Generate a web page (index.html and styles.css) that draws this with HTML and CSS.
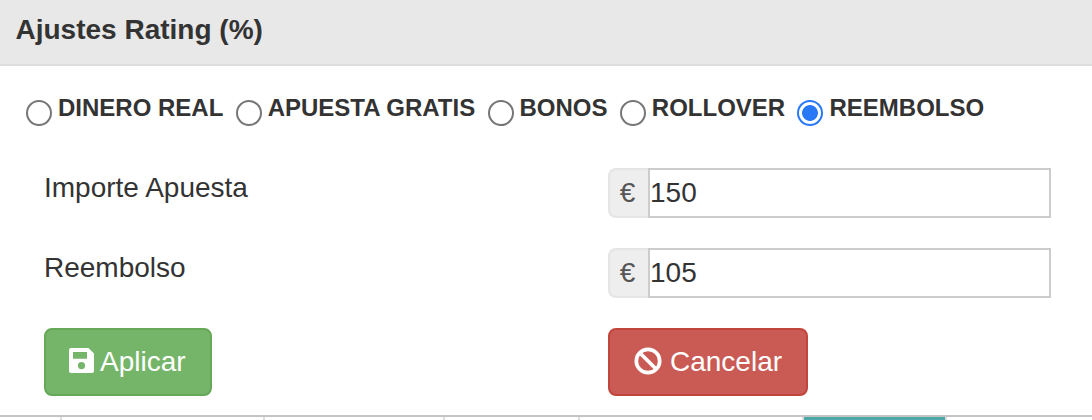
FILE: index.html
```html
<!DOCTYPE html>
<html lang="es">
  <head>
    <title>Ajustes Rating</title>
    <meta charset="UTF-8">
    <meta name="viewport" content="width=device-width, initial-scale=1.0">
    <link rel="stylesheet" href="styles.css">
  </head>
  <body>
    <div class="panel">
      <div class="panel-heading">Ajustes Rating (%)</div>
      <div class="panel-body">
        <div class="types">
          <label><input type="radio" name="type"><span>DINERO REAL</span></label>
          <label><input type="radio" name="type"><span>APUESTA GRATIS</span></label>
          <label><input type="radio" name="type"><span>BONOS</span></label>
          <label><input type="radio" name="type"><span>ROLLOVER</span></label>
          <label><input type="radio" name="type" checked><span>REEMBOLSO</span></label>
        </div>

        <div class="row">
          <label for="stake">Importe Apuesta</label>
          <div class="input-group">
            <span class="addon">€</span>
            <input id="stake" type="text" value="150">
          </div>
        </div>
        <div class="row">
          <label for="refund">Reembolso</label>
          <div class="input-group">
            <span class="addon">€</span>
            <input id="refund" type="text" value="105">
          </div>
        </div>

        <div class="row buttons">
          <div>
            <button class="btn btn-success">
              <svg class="icon-save" width="25" height="25" viewBox="0 0 25 25">
                <path fill="#fff" fill-rule="evenodd" d="M2 0H19.5L25 5.5V23Q25 25 23 25H2Q0 25 0 23V2Q0 0 2 0ZM4 4V10.7H18V4ZM12.5 14a3.6 3.6 0 1 0 0 7.2a3.6 3.6 0 1 0 0-7.2Z"/>
              </svg>
              <span>Aplicar</span>
            </button>
          </div>
          <div>
            <button class="btn btn-danger">
              <svg class="icon-ban" width="28" height="28" viewBox="0 0 28 28">
                <g fill="none" stroke="#fff" stroke-width="3.7">
                  <circle cx="14" cy="14" r="11.7"/>
                  <path d="M5.7 5.7L22.3 22.3"/>
                </g>
              </svg>
              <span>Cancelar</span>
            </button>
          </div>
        </div>
      </div>
    </div>

    <!--top edge of the table below the panel-->
    <div class="grid-top">
      <div></div>
      <div></div>
      <div></div>
      <div></div>
      <div></div>
      <div class="active"></div>
      <div></div>
    </div>
  </body>
</html>
```
FILE: styles.css
```css
* {
  box-sizing: border-box;
}
body {
  font-family: "Liberation Sans", Arial, Helvetica, sans-serif;
  font-size: 28px;
  color: #333;
  background: #fff;
  margin: 0;
  height: 420px;
  overflow: hidden;
}
.panel {
  height: 415px;
}
.panel-heading {
  height: 66px;
  padding: 14px 15.5px 0;
  line-height: 32px;
  font-weight: bold;
  background: #e8e8e8;
  border-bottom: 2px solid #ddd;
}
/* Bet type selector */
.types {
  display: flex;
  height: 102px;
  padding: 28px 0 0 26px;
  font-size: 24px;
  font-weight: bold;
  line-height: 28px;
}
.types label {
  display: flex;
  margin-right: 12.3px;
  white-space: nowrap;
}
.types input {
  appearance: none;
  flex: none;
  width: 26px;
  height: 26px;
  margin: 6px 6px 0 0;
  border: 2px solid #767676;
  border-radius: 50%;
  background: #fff;
}
.types input:checked {
  border-color: #2878f8;
  background: radial-gradient(circle, #2878f8 7.5px, #fff 8.3px);
}
/* Form rows */
.row {
  display: grid;
  grid-template-columns: 564px 443px;
  height: 80px;
  padding-left: 44px;
}
.row label {
  line-height: 32px;
  padding-top: 4px;
}
.input-group {
  display: flex;
  height: 50px;
}
.addon {
  width: 40px;
  padding-right: 3px;
  border: 2px solid #e5e5e5;
  border-right: 0;
  border-radius: 8px 0 0 8px;
  background: #eee;
  color: #555;
  line-height: 46px;
  text-align: center;
}
.input-group input {
  flex: 1;
  min-width: 0;
  padding: 0;
  border: 2px solid #ccc;
  border-radius: 0;
  color: #333;
  font: inherit;
}
/* Buttons */
.btn {
  display: flex;
  align-items: center;
  height: 68px;
  padding: 0 24px;
  border: 2px solid;
  border-radius: 8px;
  color: #fff;
  font: inherit;
}
.btn-success {
  width: 168px;
  background: #75b569;
  border-color: #65a958;
}
.btn-danger {
  width: 200px;
  background: #ca5b54;
  border-color: #c2453d;
}
.icon-save {
  flex: none;
  margin: 0 6px 3px -1px;
}
.icon-ban {
  flex: none;
  margin: 0 8px 3px 0;
}
.grid-top {
  display: grid;
  grid-template-columns: 62px 203px 180px 135px 224px 143px 1fr;
  height: 5px;
  border-top: 2px solid #c4c4c4;
}
.grid-top div {
  border-right: 2px solid #ddd;
}
.grid-top div:last-child {
  border-right: 0;
}
.grid-top .active {
  background: #4ba8a6;
}
```
